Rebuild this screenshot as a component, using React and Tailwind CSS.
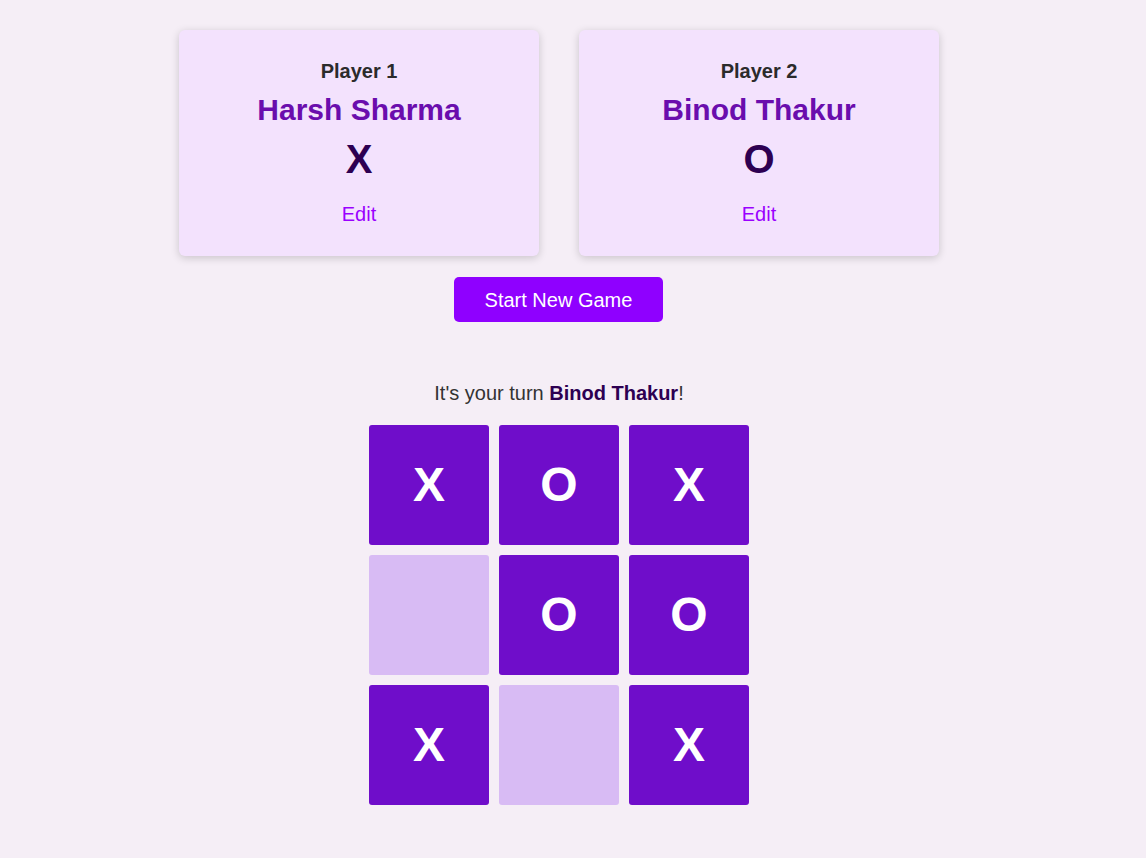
import { useState } from "react";

const board = [
    ["X", "O", "X"],
    [null, "O", "O"],
    ["X", null, "X"],
];

const players = [
    { label: "Player 1", name: "Harsh Sharma", symbol: "X" },
    { label: "Player 2", name: "Binod Thakur", symbol: "O" },
];

const PlayerCard = ({ player }) => (
    <div className="w-[360px] h-[226px] rounded-md bg-[#f3e2fd] shadow-[0_2px_8px_rgba(0,0,0,0.18)] flex flex-col items-center pt-[30px]">
        <h3 className="text-[20px] leading-[23px] font-bold text-[#2b2b2b]">
            {player.label}
        </h3>
        <p className="mt-[10px] text-[30px] leading-[34px] font-bold text-[#6a0dad]">
            {player.name}
        </p>
        <p className="mt-[9px] text-[40px] leading-[46px] font-bold text-[#2d0052]">
            {player.symbol}
        </p>
        <button className="mt-[21px] text-[20px] leading-[23px] text-[#9a00ff]">
            Edit
        </button>
    </div>
);

const App = () => {
    const [cells] = useState(board);

    return (
        <div className="min-h-[858px] bg-[#f5eef6] font-['Liberation_Sans',Arial,sans-serif]">
            <div className="w-[1118px] flex flex-col items-center pt-[30px]">
                <div className="flex gap-[40px]">
                    {players.map((p) => (
                        <PlayerCard key={p.label} player={p} />
                    ))}
                </div>
                <button className="mt-[21px] mr-[1px] w-[209px] h-[45px] rounded-[5px] bg-[#8f00ff] text-white text-[20px]">
                    Start New Game
                </button>
                <p className="mt-[60px] text-[20px] leading-[23px] text-[#333]">
                    It's your turn{" "}
                    <span className="font-bold text-[#2d0052]">Binod Thakur</span>!
                </p>
                <div className="mt-[20px] grid grid-cols-3 gap-[10px]">
                    {cells.flat().map((c, i) => (
                        <div
                            key={i}
                            className={
                                c
                                    ? "w-[120px] h-[120px] rounded-[3px] bg-[#6f0dca] flex items-center justify-center text-white text-[48px] font-bold"
                                    : "w-[120px] h-[120px] rounded-[3px] bg-[#d8bbf4]"
                            }
                        >
                            {c}
                        </div>
                    ))}
                </div>
            </div>
        </div>
    );
};

export default App;
